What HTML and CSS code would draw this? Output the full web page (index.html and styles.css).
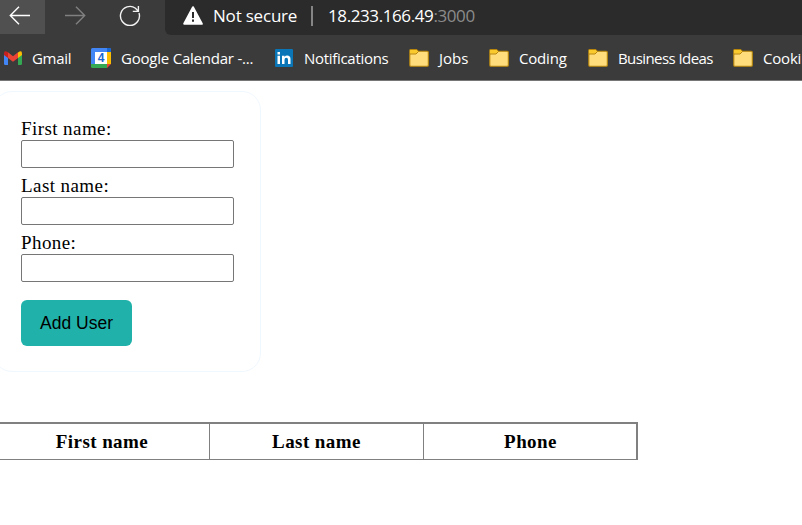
FILE: index.html
```html
<!DOCTYPE html>
<html lang="en">
<head>
<meta charset="utf-8">
<title>Users</title>
<link rel="stylesheet" href="styles.css">
</head>
<body>
<svg width="0" height="0" class="defs">
  <symbol id="folder" viewBox="0 0 20 18">
    <path d="M.8 1.5Q.8.6 1.7.6H7.5L9.5 2.3H18.3Q19.3 2.3 19.3 3.3V16.3Q19.3 17.3 18.3 17.3H1.8Q.8 17.3.8 16.3Z" fill="#ffdc7c" stroke="#b8860b" stroke-width="1.1"/>
    <path d="M1.2 1.1H7.5L9 2.6 7 4.7H1.2Z" fill="#fac92c"/>
    <path d="M1 5H7L9.5 2.5" fill="none" stroke="#b8860b" stroke-width="1"/>
  </symbol>
</svg>
<header>
  <div class="toolbar">
    <button class="nav active" aria-label="Back"><svg width="22" height="20" viewBox="0 0 22 20"><path d="M21 9.5H1.5M10 .8L1.3 9.5 10 18.2" stroke="#fff"/></svg></button>
    <button class="nav forward" aria-label="Forward"><svg width="22" height="20" viewBox="0 0 22 20"><path d="M1 9.5H20.5M12 .8L20.7 9.5 12 18.2" stroke="#808080"/></svg></button>
    <button class="nav reload" aria-label="Reload"><svg width="22" height="22" viewBox="0 0 22 22"><path d="M20 8A9.5 9.5 0 1 1 16.5 3.2L19.4 6.4M19.4 1V6.4H13.8" stroke="#f2f2f2"/></svg></button>
    <div class="address">
      <svg width="20" height="19" viewBox="0 0 20 19"><path d="M10 1.2L18.8 17.8H1.2Z" fill="#fff" stroke="#fff" stroke-width="2" stroke-linejoin="round"/><path d="M10 6V12M10 13.6V15.8" stroke="#2b2b2b" stroke-width="2"/></svg>
      <span class="status">Not secure</span>
      <span class="divider"></span>
      <span class="url">18.233.166.49<span class="port">:3000</span></span>
    </div>
  </div>
  <nav class="bookmarks">
    <a class="gmail"><svg width="18" height="14" viewBox="0 0 18 14"><path d="M0 3L4 6V14H1.2Q0 14 0 12.8Z" fill="#4285f4"/><path d="M14 6L18 3V12.8Q18 14 16.8 14H14Z" fill="#34a853"/><path d="M14 1.5Q18-1.5 18 2.5V4L14 7Z" fill="#fbbc04"/><path d="M0 2.5Q0-1.5 4 1.3V7L0 4Z" fill="#c5221f"/><path d="M4 1.3L9 5.2 14 1.3V7L9 10.8 4 7Z" fill="#ea4335"/></svg><span>Gmail</span></a>
    <a class="calendar"><svg width="20" height="20" viewBox="0 0 20 20"><path d="M0 1.5Q0 0 1.5 0H18.5Q20 0 20 1.5V4H4V16H0Z" fill="#4285f4"/><path d="M16 0H18.5Q20 0 20 1.5V4H16Z" fill="#1967d2"/><path d="M16 4H20V16H16Z" fill="#fbbc04"/><path d="M0 16H16V20H1.5Q0 20 0 18.5Z" fill="#34a853"/><path d="M16 16H20L16 20Z" fill="#ea4335"/><path d="M4 4H16V16H4Z" fill="#fff"/><text x="10" y="14.3" text-anchor="middle" class="day">4</text></svg><span>Google Calendar -...</span></a>
    <a class="linkedin"><svg width="18" height="18" viewBox="0 0 18 18"><rect width="18" height="18" rx="1" fill="#0a76b7"/><path d="M2.5 6.8H5V15H2.5ZM2.5 3H5V5.4H2.5ZM7 6.8H9.5V8Q10.4 6.6 12.2 6.6 15.5 6.6 15.5 10.2V15H13V10.7Q13 8.8 11.4 8.8 9.5 8.8 9.5 11V15H7Z" fill="#fff"/></svg><span>Notifications</span></a>
    <a class="jobs"><svg width="20" height="18"><use href="#folder"/></svg><span>Jobs</span></a>
    <a class="coding"><svg width="20" height="18"><use href="#folder"/></svg><span>Coding</span></a>
    <a class="ideas"><svg width="20" height="18"><use href="#folder"/></svg><span>Business Ideas</span></a>
    <a class="cooking"><svg width="20" height="18"><use href="#folder"/></svg><span>Cooking</span></a>
  </nav>
</header>
<main>
  <form>
    <label>First name:<input type="text"></label>
    <label>Last name:<input type="text"></label>
    <label>Phone:<input type="text"></label>
    <button type="button" class="add">Add User</button>
  </form>
  <div class="users">
    <div>First name</div>
    <div>Last name</div>
    <div>Phone</div>
  </div>
</main>
</body>
</html>
```
FILE: styles.css
```css
* { box-sizing: border-box; }
html, body { height: 100%; }
body { margin: 0; overflow: hidden; background: #fff; color: #000; font: 19px/22px "Liberation Serif", serif; letter-spacing: 0.42px; }
.defs { display: block; }
header { height: 81px; background: #3b3b3b; border-bottom: 1px solid #767676; color: #fff; font-family: "Open Sans", "Noto Sans", sans-serif; letter-spacing: 0; white-space: nowrap; overflow: hidden; }
.toolbar { display: flex; height: 35px; }
.nav { width: 45px; height: 34px; padding: 0 0 3px; border: 0; background: none; display: flex; align-items: center; justify-content: center; flex: none; }
.nav path { fill: none; stroke-width: 1.4; }
.nav.active { background: #505050; padding-right: 5px; }
.nav.forward { margin-left: 7px; }
.nav.reload { margin-left: 10px; }
.address { flex: 1; margin-left: 13px; padding: 0 0 4px 18px; background: #2b2b2b; border-bottom-left-radius: 6px; display: flex; align-items: center; font-size: 17px; }
.address svg { flex: none; margin-right: 10px; }
.status { width: 98px; letter-spacing: -0.2px; }
.divider { width: 2px; height: 20px; background: #858585; margin-right: 15px; }
.url { letter-spacing: -0.4px; }
.port { color: #8b8b8b; }
.bookmarks { display: flex; height: 45px; padding-left: 4px; font-size: 15px; }
.bookmarks a { display: flex; align-items: center; flex: none; gap: 10px; }
.bookmarks svg { flex: none; }
.gmail { width: 87px; letter-spacing: -0.3px; }
.calendar { width: 184px; letter-spacing: -0.22px; }
.linkedin { width: 134px; letter-spacing: -0.3px; }
.bookmarks .linkedin { gap: 11px; }
.jobs { width: 80px; }
.coding { width: 99px; letter-spacing: -0.2px; }
.ideas { width: 145px; letter-spacing: -0.58px; }
.cooking { letter-spacing: -0.2px; }
.day { font: bold 12px "Liberation Sans", sans-serif; fill: #1967d2; }
form { width: 268px; height: 281px; margin: 10px 0 0 -7px; padding: 26px 0 0 27px; border: 1px solid #f0f8ff; border-radius: 19px; }
label { display: block; height: 57px; }
input { display: block; width: 213px; height: 28px; margin: 0; border: 1px solid #767676; border-radius: 2px; background: #fff; }
.add { display: block; width: 111px; height: 46px; margin-top: 11px; padding: 0; border: 0; border-radius: 6px; background: #20b2aa; color: #000; font: 17.5px "Liberation Sans", sans-serif; letter-spacing: 0; }
.users { display: grid; grid-template-columns: 214px 214px 214px; width: 645px; height: 38px; margin: 50px 0 0 -7px; border: 2px solid gray; border-bottom-width: 1px; font-weight: bold; text-align: center; line-height: 36px; }
.users div + div { border-left: 1px solid gray; }
```
